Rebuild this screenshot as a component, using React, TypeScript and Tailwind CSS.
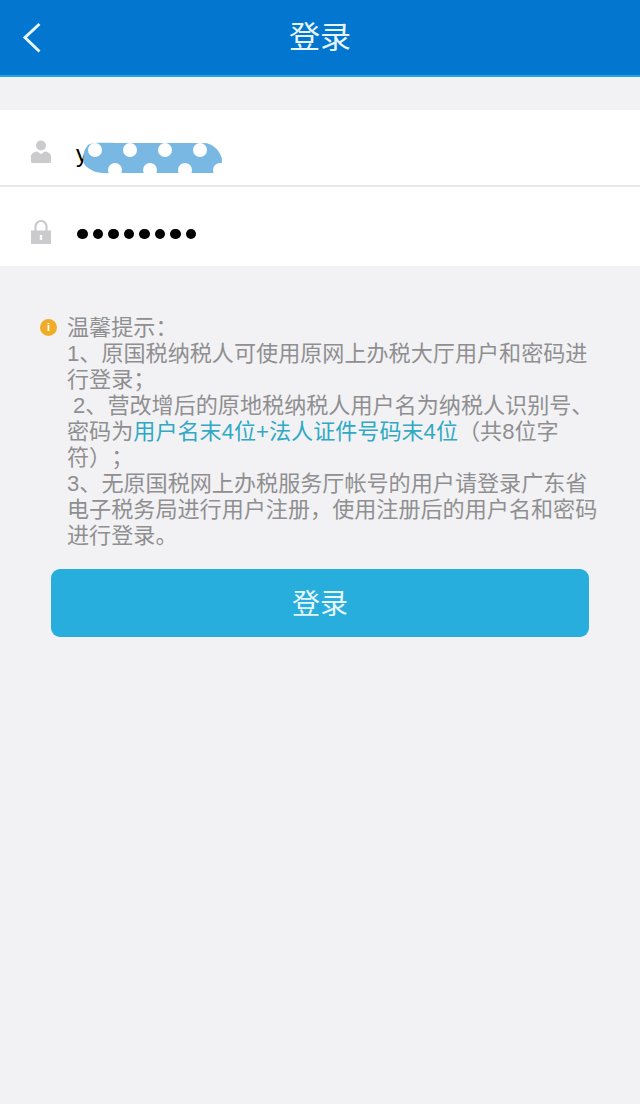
const cjk = "font-['Liberation_Sans','Noto_Sans_CJK_SC',sans-serif]";

function UserIcon() {
  return (
    <svg width="22" height="25" viewBox="0 0 24 26" className="mt-[7px] text-[#cbcbcd]">
      <circle cx="12" cy="6.500" r="5.500" fill="currentColor" />
      <path d="M1 24.500v-6c0-3 3-5 7-5.500l4 3 4-3c4 .5 7 2.500 7 5.500v6c0 .5-.5 1-1 1H2c-.5 0-1-.5-1-1z" fill="currentColor" />
    </svg>
  );
}

function LockIcon() {
  return (
    <svg width="20" height="24" viewBox="0 0 20 24" className="mt-[11px] text-[#cbcbcd]">
      <path d="M4.500 11V6.500a5.500 5.500 0 0 1 11 0V11" fill="none" stroke="currentColor" strokeWidth="2.200" />
      <path d="M0 10.500h20V24H0z" fill="currentColor" />
      <rect x="8.800" y="15" width="2.400" height="5" fill="#fff" />
    </svg>
  );
}

// the scribble that hides the user name
function Scribble() {
  const top = [13, 48, 83, 118];
  const bottom = [33, 68, 103, 138];
  return (
    <svg width="140" height="33" viewBox="0 0 140 33" className="absolute left-[82px] top-[142px]">
      <path d="M6 3C12 0 20 1 40 1h82c8 0 16 7 18 16 0 8-3 13-9 14H28C16 32 8 29 2 22 0 15 2 8 6 3z" fill="#7ab8e4" />
      {top.map((x) => (
        <circle key={x} cx={x} cy="8" r="7" fill="#fff" />
      ))}
      {bottom.map((x) => (
        <circle key={x} cx={x} cy="28" r="7" fill="#fff" />
      ))}
    </svg>
  );
}

export default function App() {
  return (
    <div className={`relative h-[1104px] w-[640px] overflow-hidden bg-[#f2f2f4] ${cjk}`}>
      {/* Header */}
      <div className="relative flex h-[77px] items-center justify-center border-b-2 border-[#29a3dc] bg-[#0376cf]">
        <svg width="20" height="32" viewBox="0 0 20 32" className="absolute left-[22px] top-[22px]">
          <path d="M17.500 2 3 15.500 17.500 29.500" fill="none" stroke="#e6f6fb" strokeWidth="3" />
        </svg>
        <span className="text-[31px] leading-none text-[#e8f6fb]">登录</span>
      </div>

      {/* Form */}
      <div className="mt-[33px] bg-white">
        <div className="flex h-[77px] items-center border-b-2 border-[#e9e9eb] pl-[30px]">
          <UserIcon />
          <span className="mt-[12px] ml-[24px] text-[24px] leading-none text-black">y</span>
        </div>
        <div className="flex h-[79px] items-center pl-[31px]">
          <LockIcon />
          <div className="mt-[15px] ml-[26px] flex gap-[5px]">
            {[0, 1, 2, 3, 4, 5, 6, 7].map((i) => (
              <span key={i} className="size-[10.500px] rounded-full bg-black" />
            ))}
          </div>
        </div>
      </div>
      <Scribble />

      {/* Tips */}
      <div className="mt-[49px] flex pl-[40px]">
        <span className="mt-[4px] flex size-[17px] shrink-0 items-center justify-center rounded-full bg-[#f0ac27] text-[11px] leading-none font-bold text-white">
          i
        </span>
        <p className="ml-[10px] w-[536px] text-[22.100px] leading-[26px] text-[#8f8f91] [text-spacing-trim:space-all]">
          温馨提示：
          <br />
          1、原国税纳税人可使用原网上办税大厅用户和密码进行登录；
          <br />
          <span className="ml-[6px]">2、营改增后的原地税纳税人用户名为纳税人识别号、</span>
          <br />
          密码为<span className="text-[#30a9c4]">用户名末4位+法人证件号码末4位</span>（共8位字符）；
          <br />
          3、无原国税网上办税服务厅帐号的用户请登录广东省电子税务局进行用户注册，使用注册后的用户名和密码进行登录。
        </p>
      </div>

      {/* Submit */}
      <button className="mx-auto mt-[20px] flex h-[68px] w-[538px] items-center justify-center rounded-[9px] bg-[#27aedd] pt-[3px] text-[28px] leading-none text-[#e8f7fb]">
        登录
      </button>
    </div>
  );
}
